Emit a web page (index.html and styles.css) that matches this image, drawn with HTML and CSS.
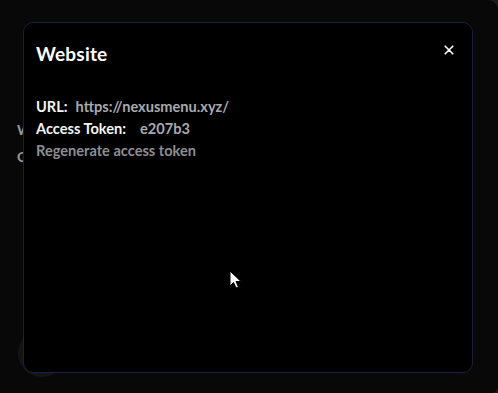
FILE: index.html
```html
<!DOCTYPE html>
<html lang="en">
<head>
    <meta charset="UTF-8">
    <meta name="viewport" content="width=device-width, initial-scale=1.0">
    <title>Website</title>
<link rel="stylesheet" href="styles.css">
</head>
<body>
    <section class="app">
        <div class="page-lines">
            <p class="page-line">W</p>
            <p class="page-line">C</p>
        </div>
        <div class="avatar"></div>
    </section>
    <section class="overlay">
        <div class="modal">
            <div class="modal-head">
                <h2 class="modal-title">Website</h2>
                <button class="close" type="button" aria-label="Close">
                    <svg width="10" height="10" viewBox="0 0 10 10"><path d="M1.2 1.2L8.8 8.8M8.8 1.2L1.2 8.8" stroke="#fff" stroke-width="1.6" stroke-linecap="round"/></svg>
                </button>
            </div>
            <div class="modal-body">
                <p class="row"><span class="label">URL:</span><span class="value">https://nexusmenu.xyz/</span></p>
                <p class="row"><span class="label">Access Token:</span><span class="value token">e207b3</span></p>
                <p class="row link">Regenerate access token</p>
            </div>
        </div>
    </section>
    <svg class="cursor" width="14" height="20" viewBox="0 0 14 20"><path d="M1 1V16L4.5 12.5L7 18L9.5 17L7 11.5H12Z" fill="#fff" stroke="#000" stroke-width="1"/></svg>
</body>
</html>
```
FILE: styles.css
```css
* {
    box-sizing: border-box;
}
html, body {
    height: 100%;
}
body {
    margin: 0;
    background-color: #1b1b1b;
    font-family: Lato, "Noto Sans", sans-serif;
    color: #fff;
    overflow: hidden;
}
.app {
    height: 393px;
    width: 498px;
    background-color: #080808;
    border-top-right-radius: 10px;
    border-bottom-right-radius: 6px;
    display: flex;
    flex-direction: column;
    justify-content: space-between;
    padding: 121px 0 16px 17px;
}
.page-lines {
    display: flex;
    flex-direction: column;
    gap: 10px;
}
.page-line {
    margin: 0;
    font-size: 14px;
    font-weight: bold;
    color: #9a9a9a;
}
.avatar {
    width: 48px;
    height: 48px;
    border-radius: 50%;
    background-color: #141414;
    margin-left: 1px;
}
.overlay {
    position: absolute;
    left: 0;
    top: 0;
    width: 498px;
    height: 393px;
    padding: 22px 25px 20px 23px;
}
.modal {
    height: 100%;
    background-color: #000;
    border: 1px solid #1d1f3b;
    border-radius: 10px;
    padding: 19px 18px 0 12px;
}
.modal-head {
    display: flex;
    justify-content: space-between;
    align-items: center;
    height: 22px;
}
.modal-title {
    margin: 0;
    font-size: 19px;
    font-weight: bold;
    letter-spacing: 0.2px;
}
.close {
    background: none;
    border: none;
    padding: 0;
    display: flex;
    margin-top: -6px;
}
.modal-body {
    margin-top: 34px;
    display: flex;
    flex-direction: column;
    gap: 5px;
}
.row {
    margin: 0;
    font-size: 14.6px;
    line-height: 17px;
    font-weight: bold;
    display: flex;
    gap: 8px;
}
.label {
    color: #f4f4f4;
}
.value {
    color: #a9a9ad;
}
.token {
    margin-left: 6px;
}
.link {
    color: #8e8e92;
}
.cursor {
    position: absolute;
    left: 229px;
    top: 270px;
}
```
